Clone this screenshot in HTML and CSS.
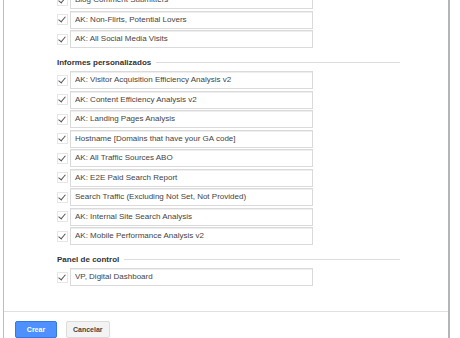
FILE: index.html
```html
<!DOCTYPE html>
<html lang="es">
<head>
  <meta charset="UTF-8" />
  <title>Compartir elementos</title>
  <link rel="stylesheet" href="styles.css">
</head>
<body>
  <div class="dialog">
    <div class="content">
      <ul class="items first">
        <li class="item"><span class="check"></span><span class="name">Blog Comment Submitters</span></li>
        <li class="item"><span class="check"></span><span class="name">AK: Non-Flirts, Potential Lovers</span></li>
        <li class="item"><span class="check"></span><span class="name">AK: All Social Media Visits</span></li>
      </ul>

      <h4 class="section"><span>Informes personalizados</span></h4>
      <ul class="items">
        <li class="item"><span class="check"></span><span class="name">AK: Visitor Acquisition Efficiency Analysis v2</span></li>
        <li class="item"><span class="check"></span><span class="name">AK: Content Efficiency Analysis v2</span></li>
        <li class="item"><span class="check"></span><span class="name">AK: Landing Pages Analysis</span></li>
        <li class="item"><span class="check"></span><span class="name">Hostname [Domains that have your GA code]</span></li>
        <li class="item"><span class="check"></span><span class="name">AK: All Traffic Sources ABO</span></li>
        <li class="item"><span class="check"></span><span class="name">AK: E2E Paid Search Report</span></li>
        <li class="item"><span class="check"></span><span class="name">Search Traffic (Excluding Not Set, Not Provided)</span></li>
        <li class="item"><span class="check"></span><span class="name">AK: Internal Site Search Analysis</span></li>
        <li class="item"><span class="check"></span><span class="name">AK: Mobile Performance Analysis v2</span></li>
      </ul>

      <h4 class="section"><span>Panel de control</span></h4>
      <ul class="items">
        <li class="item"><span class="check"></span><span class="name">VP, Digital Dashboard</span></li>
      </ul>
    </div>

    <div class="footer">
      <button class="btn primary">Crear</button>
      <button class="btn">Cancelar</button>
    </div>
  </div>
</body>
</html>
```

FILE: styles.css
```css
html, body {
  margin: 0;
  padding: 0;
  background: #fff;
  overflow: hidden;
}

body {
  font-family: "Liberation Sans", Arial, sans-serif;
  font-size: 8px;
  color: #444;
}

.dialog {
  margin-left: 3px;
  width: 444px;
  height: 360px;
  border-left: 1px solid #bdbdbd;
  border-right: 2px solid #b5b5b5;
}

.content {
  padding: 0 0 25px 53px;
}

.items {
  list-style: none;
  margin: 0;
  padding: 0;
  display: flex;
  flex-direction: column;
  gap: 1.5px;
}

.items.first {
  margin-top: -9px;
}

.item {
  display: flex;
  align-items: center;
  height: 18px;
}

.check {
  width: 9px;
  height: 9px;
  margin-right: 2px;
  border: 1px solid #e6e6e6;
  position: relative;
}

.check::after {
  content: "";
  position: absolute;
  left: 2px;
  top: 0;
  width: 3px;
  height: 6px;
  border-right: 1.5px solid #555;
  border-bottom: 1.5px solid #555;
  transform: rotate(40deg);
}

.name {
  box-sizing: border-box;
  width: 243px;
  height: 18px;
  line-height: 16px;
  padding-left: 4px;
  border: 1px solid #dadada;
  box-shadow: inset 0 1px 0 #eee;
  white-space: nowrap;
  overflow: hidden;
}

.section {
  display: flex;
  align-items: center;
  width: 343px;
  height: 12px;
  margin: 8px 0 3px;
  font-size: 8px;
  font-weight: bold;
  color: #333;
}

.section::after {
  content: "";
  flex: 1;
  height: 1px;
  margin-left: 5px;
  background: #dcdcdc;
}

.footer {
  display: flex;
  gap: 9px;
  padding: 9px 0 0 11px;
  border-top: 1px solid #e0e0e0;
}

.btn {
  height: 17px;
  min-width: 42px;
  padding: 0 6px;
  font-family: "Liberation Sans", Arial, sans-serif;
  font-size: 7px;
  font-weight: bold;
  color: #444;
  background: #f3f3f3;
  border: 1px solid #dcdcdc;
  border-radius: 2px;
}

.btn.primary {
  color: #fff;
  background: #4d90fe;
  border-color: #3079ed;
}
```
